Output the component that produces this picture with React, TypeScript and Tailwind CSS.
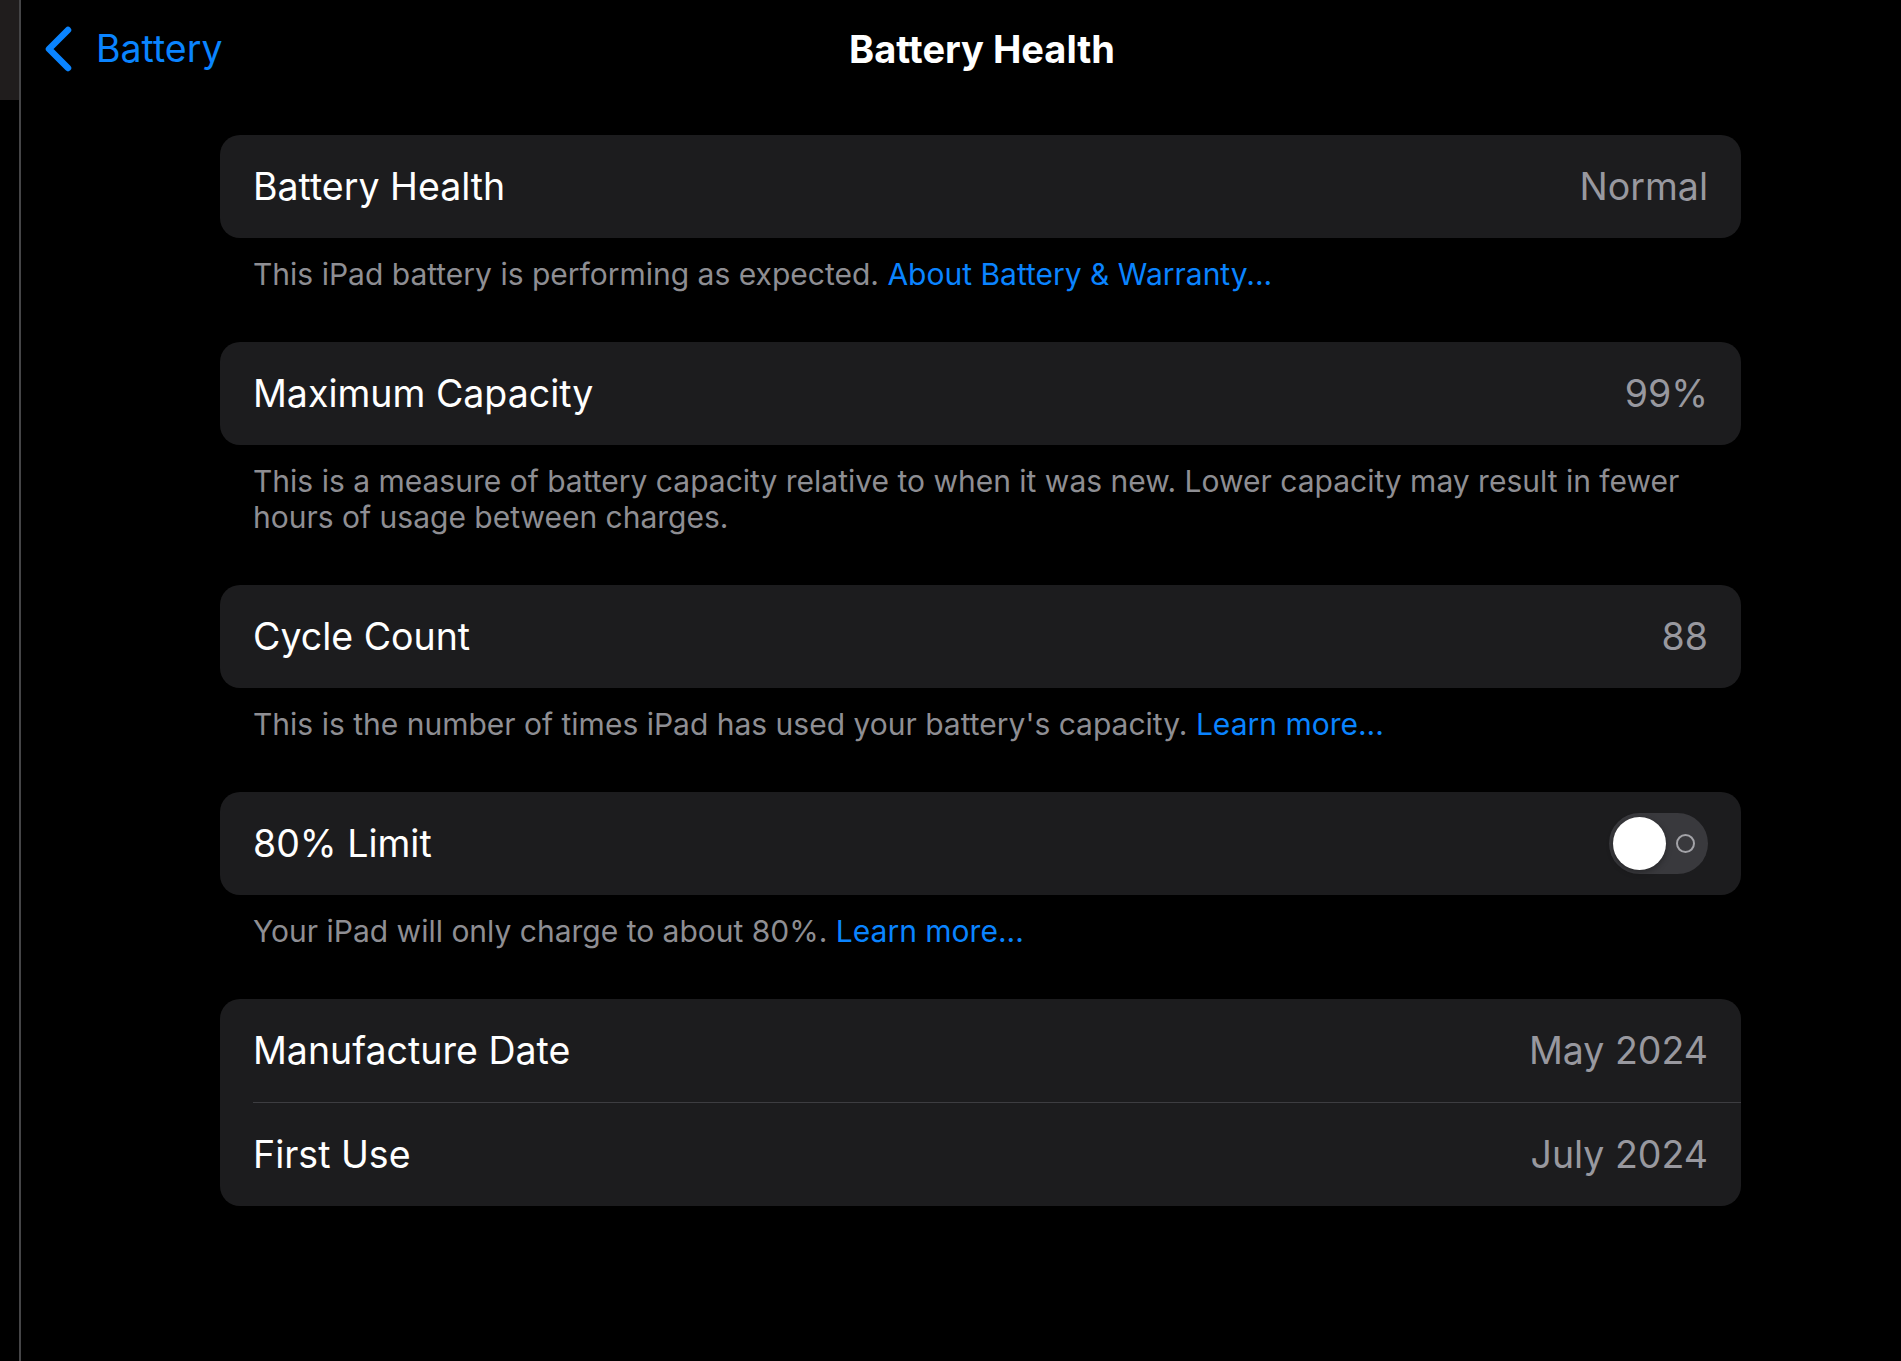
const FONT = "font-['Inter','Noto_Sans',sans-serif]";

interface RowProps {
  label: string;
  value?: string;
  toggle?: boolean;
}

function Toggle() {
  return (
    <div className="flex h-[61px] w-[99px] items-center rounded-full bg-[#39393d] px-[4px]">
      <div className="h-[53px] w-[53px] rounded-full bg-white shadow-[0_2px_6px_rgba(0,0,0,0.35)]" />
      <div className="ml-[10px] h-[19px] w-[19px] rounded-full border-[2.5px] border-[#a3a3a8]" />
    </div>
  );
}

function Row({ label, value, toggle }: RowProps) {
  return (
    <div className="flex h-[103px] items-center justify-between pl-[33px] pr-[33px]">
      <span className="text-[37.5px] leading-none text-white">{label}</span>
      {toggle ? (
        <Toggle />
      ) : (
        <span className="text-[37.5px] leading-none text-[#98989f]">{value}</span>
      )}
    </div>
  );
}

function Footer({ children }: { children: React.ReactNode }) {
  return (
    <p className="px-[33px] pt-[18px] pb-[50px] text-[30px] leading-[36px] text-[#8e8e93]">
      {children}
    </p>
  );
}

function Link({ children }: { children: React.ReactNode }) {
  return <span className="text-[#0a84ff]">{children}</span>;
}

export default function App() {
  return (
    <div className={`flex min-h-[1361px] w-full bg-black ${FONT}`}>
      {/* sliver of the sidebar on the left */}
      <div className="flex w-[19px] shrink-0 flex-col">
        <div className="h-[100px] bg-[#201d1d]" />
      </div>
      <div className="w-[2px] shrink-0 bg-[#454547]" />

      <main className="flex-1">
        <header className="grid h-[97px] grid-cols-[1fr_auto_1fr] items-center pl-[42px]">
          <div className="-ml-[28px] flex items-center gap-[23px] pl-[8px]">
            <svg width="30" height="46" viewBox="0 0 30 46" fill="none">
              <path
                d="M25 4 L6 23 L25 42"
                stroke="#0a84ff"
                strokeWidth="6.5"
                strokeLinecap="round"
                strokeLinejoin="round"
              />
            </svg>
            <span className="text-[37.5px] leading-none text-[#0a84ff]">Battery</span>
          </div>
          <h1 className="text-[38px] font-bold leading-none text-white">Battery Health</h1>
          <div />
        </header>

        <div className="pt-[38px] pl-[199px] pr-[160px]">
          <div className="rounded-[20px] bg-[#1c1c1e]">
            <Row label="Battery Health" value="Normal" />
          </div>
          <Footer>
            This iPad battery is performing as expected. <Link>About Battery &amp; Warranty...</Link>
          </Footer>

          <div className="rounded-[20px] bg-[#1c1c1e]">
            <Row label="Maximum Capacity" value="99%" />
          </div>
          <Footer>
            This is a measure of battery capacity relative to when it was new. Lower capacity may result in fewer
            hours of usage between charges.
          </Footer>

          <div className="rounded-[20px] bg-[#1c1c1e]">
            <Row label="Cycle Count" value="88" />
          </div>
          <Footer>
            This is the number of times iPad has used your battery's capacity. <Link>Learn more...</Link>
          </Footer>

          <div className="rounded-[20px] bg-[#1c1c1e]">
            <Row label="80% Limit" toggle />
          </div>
          <Footer>
            Your iPad will only charge to about 80%. <Link>Learn more...</Link>
          </Footer>

          <div className="rounded-[20px] bg-[#1c1c1e]">
            <Row label="Manufacture Date" value="May 2024" />
            <div className="ml-[33px] h-px bg-[#3d3d41]" />
            <Row label="First Use" value="July 2024" />
          </div>
        </div>
      </main>
    </div>
  );
}
